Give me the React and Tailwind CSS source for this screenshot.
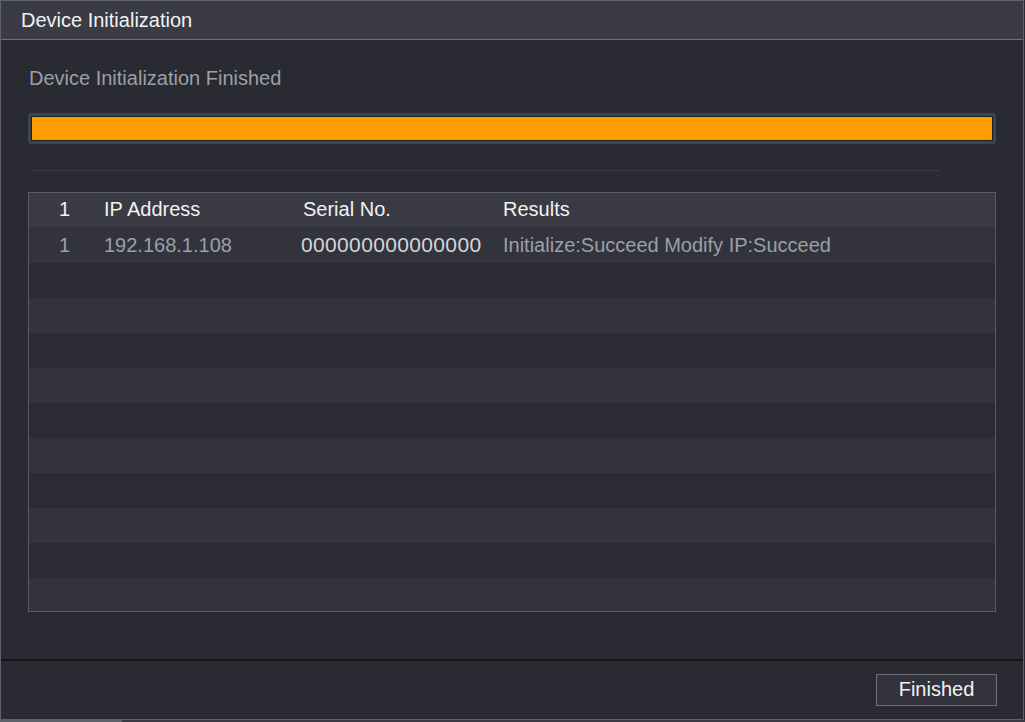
import React from "react";

const rows = [
  { no: "1", ip: "192.168.1.108", serial: "000000000000000", result: "Initialize:Succeed Modify IP:Succeed" },
];

export default function App() {
  const emptyRows = Array.from({ length: 10 });

  return (
    <div
      className="w-[1025px] h-[722px] bg-[#2a2a33] flex flex-col overflow-hidden"
      style={{ fontFamily: '"Liberation Sans", Arial, sans-serif' }}
    >
      <div className="flex flex-1 min-h-0">
        <div className="flex-1 flex flex-col border-l border-b border-r border-[#5d626b] border-t">
          {/* title bar */}
          <div className="h-[39px] bg-[#3a3b45] border-b border-[#6c7078] flex items-center pl-5 pb-px shrink-0">
            <span className="text-[20px] leading-[24px] text-[#f2f2f2]">Device Initialization</span>
          </div>

          {/* body */}
          <div className="flex-1 flex flex-col px-[27px]">
            <div className="mt-[26px] text-[20px] leading-[24px] text-[#9aa0a6] pl-px">
              Device Initialization Finished
            </div>

            <div className="mt-[23px] h-[31px] w-[968px] border-[3px] border-[#3e444d] rounded-[3px] p-px bg-[#1f2026]">
              <div className="h-full w-full bg-[#ff9c00] rounded-[1px]" />
            </div>

            <div className="mt-[26px] ml-[2px] w-[910px] h-px bg-[#3a3b45]" />

            <div className="mt-[21px] w-[968px] border border-[#5a5d66] flex flex-col">
              <div className="h-[35px] pb-[2px] bg-[#393a43] border-b border-dotted border-[#25262d] flex items-center text-[20px] leading-[24px] text-[#f2f2f2]">
                <div className="w-[75px] pr-[34px] text-right">1</div>
                <div className="w-[199px]">IP Address</div>
                <div className="w-[200px]">Serial No.</div>
                <div className="flex-1">Results</div>
              </div>
              {rows.map((r) => (
                <div key={r.no} className="h-[35px] pb-[2px] bg-[#32333c] flex items-center text-[20px] leading-[24px]">
                  <div className="w-[75px] pr-[34px] text-right text-[#9aa0a6]">{r.no}</div>
                  <div className="w-[197px] text-[#9aa0a6]">{r.ip}</div>
                  <div className="w-[202px] text-[#d6d6d6] text-[21px] tracking-[0.35px]">{r.serial}</div>
                  <div className="flex-1 text-[#9aa0a6]">{r.result}</div>
                </div>
              ))}
              {emptyRows.map((_, i) => (
                <div
                  key={i}
                  className={
                    (i % 2 === 0 ? "bg-[#2a2b34] " : "bg-[#32333c] ") +
                    (i === emptyRows.length - 1 ? "h-[33px]" : "h-[35px]")
                  }
                />
              ))}
            </div>
          </div>

          {/* footer */}
          <div className="h-[60px] border-t-2 border-[#16161c] flex items-center justify-end pr-[26px] shrink-0">
            <button className="w-[121px] h-[32px] pb-[2px] border border-[#6c7078] bg-[#32333c] text-[20px] leading-[24px] text-[#f2f2f2]">
              Finished
            </button>
          </div>
        </div>
        <div className="w-px bg-[#2a2a33]" />
      </div>
      <div className="h-[2px] flex shrink-0">
        <div className="w-[122px] bg-[#5d626b]" />
        <div className="flex-1 bg-[#3a3b45]" />
      </div>
    </div>
  );
}
